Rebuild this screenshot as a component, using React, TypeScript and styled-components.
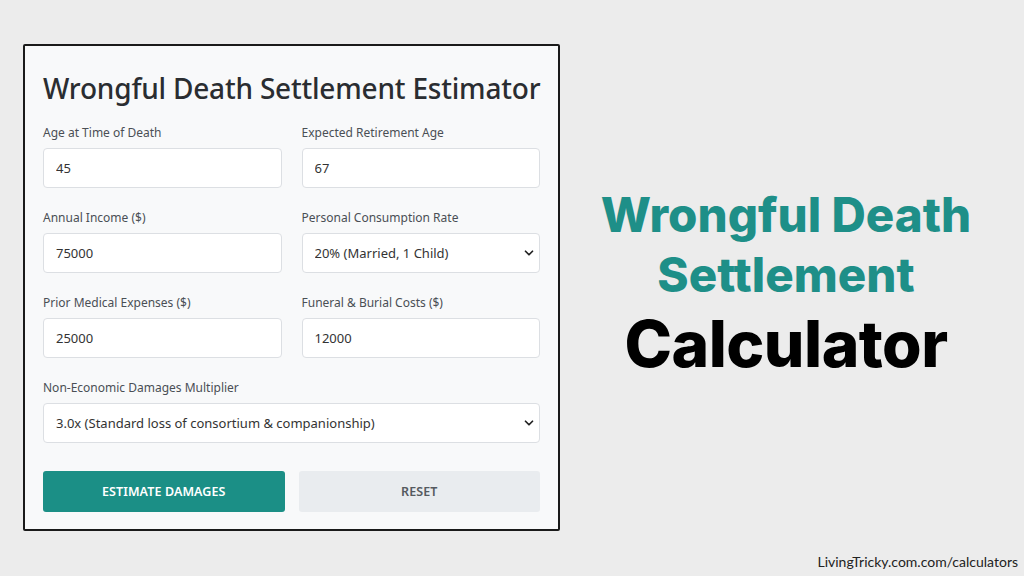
import { createGlobalStyle } from "styled-components";
import styled from "styled-components";
import { ChevronDown } from "lucide-react";

const GlobalStyle = createGlobalStyle`
  html, body {
    margin: 0;
    padding: 0;
    background: #ececec;
  }
  * {
    box-sizing: border-box;
  }
`;

const Page = styled.div`
  width: 1024px;
  height: 576px;
  display: flex;
  flex-direction: column;
  background: #ececec;
  overflow: hidden;
`;

const Main = styled.div`
  display: flex;
  padding: 44px 0 0 23px;
  flex: 1;
`;

const Card = styled.div`
  width: 537px;
  height: 487px;
  border: 2px solid #1a1a1a;
  border-radius: 2px;
  background: #f8f9fa;
  padding: 22px 18px 0 18px;
  font-family: "Noto Sans", "Open Sans", sans-serif;
`;

const Title = styled.h1`
  margin: 0 0 16px 0;
  font-size: 28px;
  font-weight: 500;
  line-height: 40px;
  color: #2a2d31;
  letter-spacing: -0.2px;
  white-space: nowrap;
`;

const Grid = styled.div`
  display: grid;
  grid-template-columns: 1fr 1fr;
  column-gap: 20px;
  row-gap: 21px;
`;

const Field = styled.div<{ $wide?: boolean }>`
  display: flex;
  flex-direction: column;
  grid-column: ${(p) => (p.$wide ? "1 / span 2" : "auto")};
`;

const Label = styled.label`
  font-size: 12px;
  line-height: 18px;
  color: #4a4f55;
  margin-bottom: 6px;
`;

const Input = styled.input`
  height: 40px;
  width: 100%;
  border: 1px solid #dcdfe3;
  border-radius: 4px;
  background: #fff;
  padding: 0 12px;
  font-family: inherit;
  font-size: 13px;
  color: #333;
  outline: none;
`;

const SelectWrap = styled.div`
  position: relative;
  width: 100%;
`;

const Select = styled.select`
  appearance: none;
  height: 40px;
  width: 100%;
  border: 1px solid #dcdfe3;
  border-radius: 4px;
  background: #fff;
  padding: 0 12px;
  font-family: inherit;
  font-size: 13px;
  color: #333;
  outline: none;
`;

const Chevron = styled.span`
  position: absolute;
  right: 4px;
  top: 13px;
  display: flex;
  color: #222;
  pointer-events: none;
`;

const Buttons = styled.div`
  display: grid;
  grid-template-columns: 1fr 1fr;
  column-gap: 14px;
  margin-top: 28px;
`;

const Button = styled.button<{ $primary?: boolean }>`
  height: 41px;
  border: none;
  border-radius: 3px;
  font-family: inherit;
  font-size: 12.5px;
  font-weight: 600;
  letter-spacing: 0.1px;
  text-transform: uppercase;
  background: ${(p) => (p.$primary ? "#1b8f86" : "#e9ecef")};
  color: ${(p) => (p.$primary ? "#ffffff" : "#555a60")};
  cursor: pointer;
`;

const Hero = styled.div`
  flex: 1;
  display: flex;
  flex-direction: column;
  align-items: center;
  padding-top: 141px;
  padding-right: 12px;
  font-family: "Inter", "Noto Sans", sans-serif;
  font-weight: 800;
`;

const HeroLine = styled.div<{ $dark?: boolean }>`
  font-size: ${(p) => (p.$dark ? "64px" : "47.5px")};
  line-height: ${(p) => (p.$dark ? "78px" : "60px")};
  color: ${(p) => (p.$dark ? "#000" : "#1e8f88")};
  letter-spacing: ${(p) => (p.$dark ? "-0.5px" : "0px")};
  white-space: nowrap;
`;

const Footer = styled.div`
  display: flex;
  justify-content: flex-end;
  padding: 0 6px 6px 0;
  font-family: "Lato", "Open Sans", sans-serif;
  font-size: 14px;
  color: #222;
`;

function Dropdown({ value }: { value: string }) {
  return (
    <SelectWrap>
      <Select defaultValue={value}>
        <option>{value}</option>
      </Select>
      <Chevron>
        <ChevronDown size={14} strokeWidth={3} />
      </Chevron>
    </SelectWrap>
  );
}

export default function App() {
  return (
    <Page>
      <GlobalStyle />
      <Main>
        <Card>
          <Title>Wrongful Death Settlement Estimator</Title>
          <Grid>
            <Field>
              <Label>Age at Time of Death</Label>
              <Input defaultValue="45" />
            </Field>
            <Field>
              <Label>Expected Retirement Age</Label>
              <Input defaultValue="67" />
            </Field>
            <Field>
              <Label>Annual Income ($)</Label>
              <Input defaultValue="75000" />
            </Field>
            <Field>
              <Label>Personal Consumption Rate</Label>
              <Dropdown value="20% (Married, 1 Child)" />
            </Field>
            <Field>
              <Label>Prior Medical Expenses ($)</Label>
              <Input defaultValue="25000" />
            </Field>
            <Field>
              <Label>Funeral &amp; Burial Costs ($)</Label>
              <Input defaultValue="12000" />
            </Field>
            <Field $wide>
              <Label>Non-Economic Damages Multiplier</Label>
              <Dropdown value="3.0x (Standard loss of consortium & companionship)" />
            </Field>
          </Grid>
          <Buttons>
            <Button $primary>Estimate Damages</Button>
            <Button>Reset</Button>
          </Buttons>
        </Card>
        <Hero>
          <HeroLine>Wrongful Death</HeroLine>
          <HeroLine>Settlement</HeroLine>
          <HeroLine $dark>Calculator</HeroLine>
        </Hero>
      </Main>
      <Footer>LivingTricky.com.com/calculators</Footer>
    </Page>
  );
}
